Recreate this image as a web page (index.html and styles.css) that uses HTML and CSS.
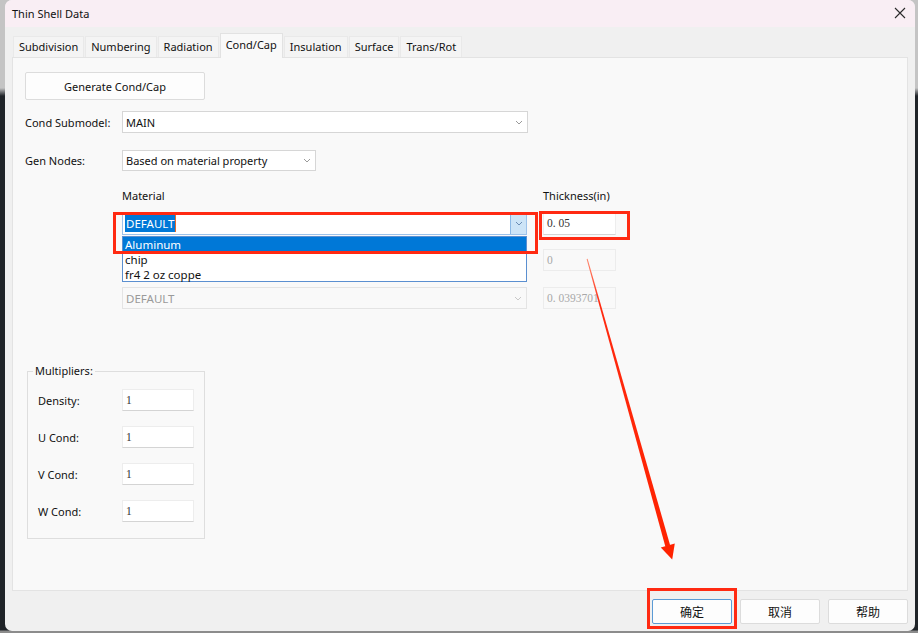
FILE: index.html
```html
<!DOCTYPE html>
<html>
<head>
<meta charset="utf-8">
<title>Thin Shell Data</title>
<link rel="stylesheet" href="styles.css">
</head>
<body>
<div class="screen">
  <div class="win">
    <div class="titlebar">
      <span class="title">Thin Shell Data</span>
      <svg class="close" width="12" height="12" viewBox="0 0 12 12"><path d="M1 1L11 11M11 1L1 11" stroke="#2b2b2b" stroke-width="1.1" fill="none"/></svg>
    </div>
    <div class="tabs">
      <div class="tab">Subdivision</div>
      <div class="tab">Numbering</div>
      <div class="tab">Radiation</div>
      <div class="tab active">Cond/Cap</div>
      <div class="tab">Insulation</div>
      <div class="tab">Surface</div>
      <div class="tab">Trans/Rot</div>
    </div>
    <div class="panel">
      <div class="btn gen">Generate Cond/Cap</div>
      <div class="row r-sub">
        <span class="lbl">Cond Submodel:</span>
        <div class="combo c-sub"><span class="ctext">MAIN</span><svg class="chev" width="8" height="5" viewBox="0 0 8 5"><path d="M1 1L4 4L7 1" stroke="#9a9a9a" fill="none"/></svg></div>
      </div>
      <div class="row r-gen">
        <span class="lbl">Gen Nodes:</span>
        <div class="combo c-gen"><span class="ctext">Based on material property</span><svg class="chev" width="8" height="5" viewBox="0 0 8 5"><path d="M1 1L4 4L7 1" stroke="#9a9a9a" fill="none"/></svg></div>
      </div>
      <div class="mat">
        <div class="mrow hdr"><span class="mcol">Material</span><span class="tcol">Thickness(in)</span></div>
        <div class="mrow m1">
          <div class="combo mcol c-act"><span class="sel">DEFAULT</span><span class="dropbtn"><svg width="8" height="5" viewBox="0 0 8 5"><path d="M1 1L4 4L7 1" stroke="#6a8db5" fill="none"/></svg></span></div>
          <div class="num tcol">0. 05</div>
        </div>
        <div class="mrow m2">
          <div class="mcol"></div>
          <div class="num tcol dis">0</div>
        </div>
        <div class="mrow m3">
          <div class="combo mcol c-dis"><span class="ctext">DEFAULT</span><svg class="chev" width="8" height="5" viewBox="0 0 8 5"><path d="M1 1L4 4L7 1" stroke="#c8c8c8" fill="none"/></svg></div>
          <div class="num tcol dis">0. 0393701</div>
        </div>
      </div>
      <fieldset class="mult">
        <legend>Multipliers:</legend>
        <div class="frow"><span class="flbl">Density:</span><div class="num fin">1</div></div>
        <div class="frow"><span class="flbl">U Cond:</span><div class="num fin">1</div></div>
        <div class="frow"><span class="flbl">V Cond:</span><div class="num fin">1</div></div>
        <div class="frow"><span class="flbl">W Cond:</span><div class="num fin">1</div></div>
      </fieldset>
      <div class="dropdown">
        <div class="item hi">Aluminum</div>
        <div class="item">chip</div>
        <div class="item">fr4 2 oz coppe</div>
      </div>
    </div>
    <div class="footer">
      <div class="btn fbtn def">确定</div>
      <div class="btn fbtn">取消</div>
      <div class="btn fbtn">帮助</div>
    </div>
    <div class="mark mk1"></div>
    <div class="mark mk2"></div>
    <div class="mark mk3"></div>
    <svg class="arrow" width="918" height="633" viewBox="0 0 918 633">
      <defs>
        <linearGradient id="ag" x1="587" y1="259" x2="672" y2="559" gradientUnits="userSpaceOnUse">
          <stop offset="0" stop-color="#ff8a70"/>
          <stop offset="0.15" stop-color="#ff2a10"/>
          <stop offset="1" stop-color="#ff2200"/>
        </linearGradient>
      </defs>
      <polygon points="586.6,259 587.6,258.8 670.2,545.4 665.4,546.8" fill="url(#ag)"/>
      <polygon points="674.8,543.6 660.8,547.6 672.2,559.5" fill="#ff2200"/>
    </svg>
  </div>
</div>
</body>
</html>
```
FILE: styles.css
```css
html, body {
  margin: 0;
  padding: 0;
}
body {
  width: 918px;
  height: 633px;
  overflow: hidden;
  background: linear-gradient(to bottom, #c4c4c4 0, #c4c4c4 88px, #1f2328 96px, #1f2328 630px, #8c8c8c 631px, #8c8c8c 633px);
  font-family: "Noto Sans", "Open Sans", sans-serif;
  font-size: 11px;
  color: #111;
}
.screen {
  padding-left: 5px;
}
.win {
  position: relative;
  width: 910px;
  height: 631px;
  background: #f0f0f0;
  border-radius: 7px;
  overflow: hidden;
  display: flex;
  flex-direction: column;
}
.titlebar {
  height: 27px;
  flex: none;
  background: #f9eef4;
  display: flex;
  align-items: center;
  justify-content: space-between;
  padding: 0 9px 0 7px;
}
.title {
  font-size: 11px;
  line-height: 16px;
}
.close {
  margin-top: -2px;
}
.tabs {
  display: flex;
  align-items: flex-end;
  height: 23px;
  margin-top: 7px;
  padding-left: 8px;
  flex: none;
  position: relative;
  z-index: 2;
}
.tab {
  height: 20px;
  line-height: 20px;
  padding: 0 5px;
  margin-right: 1px;
  background: #f4f4f4;
  border: 1px solid #e9e9e9;
  border-bottom: none;
  white-space: nowrap;
}
.tab.active {
  line-height: 21px;
  background: #f9f9f9;
  border-color: #e2e2e2;
  margin-bottom: -1px;
  height: 24px;
}
.panel {
  position: relative;
  margin-left: 7px;
  width: 896px;
  height: 534px;
  box-sizing: border-box;
  background: #f9f9f9;
  border: 1px solid #e3e3e3;
  padding: 14px 0 0 12px;
  flex: none;
}
.btn {
  box-sizing: border-box;
  background: #fdfdfd;
  border: 1px solid #dcdcdc;
  border-radius: 2px;
  display: flex;
  align-items: center;
  justify-content: center;
}
.gen {
  width: 180px;
  height: 28px;
}
.row {
  display: flex;
  align-items: center;
}
.lbl {
  width: 97px;
  flex: none;
}
.r-sub {
  margin-top: 11px;
}
.r-gen {
  margin-top: 17px;
}
.combo {
  box-sizing: border-box;
  height: 22px;
  background: #fff;
  border: 1px solid #d6d6d6;
  display: flex;
  align-items: center;
  justify-content: space-between;
  padding: 0 4px 0 3px;
  position: relative;
}
.ctext {
  white-space: nowrap;
}
.c-sub {
  width: 406px;
}
.c-gen {
  width: 194px;
  height: 21px;
}
.mat {
  margin-top: 17px;
  margin-left: 97px;
}
.mrow {
  display: flex;
  gap: 16px;
}
.mcol {
  width: 405px;
  flex: none;
}
.tcol {
  width: 73px;
  flex: none;
}
.hdr {
  height: 16px;
  line-height: 16px;
}
.m1 {
  margin-top: 8px;
  height: 23px;
}
.m2 {
  margin-top: 14px;
  height: 22px;
}
.m3 {
  margin-top: 16px;
  height: 22px;
}
.c-act {
  height: 23px;
  border-color: #9cc2ea;
  padding: 0 0 0 2px;
}
.sel {
  background: #0078d7;
  color: #fff;
  font-size: 11.5px;
  line-height: 17px;
  padding: 0 1px;
  border-right: 1px solid #e86a2a;
}
.dropbtn {
  width: 16px;
  height: 100%;
  box-sizing: border-box;
  background: #cce4f7;
  border-left: 1px solid #8ab8e6;
  display: flex;
  align-items: center;
  justify-content: center;
}
.c-dis {
  background: #f9f9f9;
  border-color: #e4e4e4;
  color: #9a9a9a;
  font-size: 11.5px;
}
.num {
  box-sizing: border-box;
  height: 100%;
  background: #fff;
  border: 1px solid #ededed;
  border-bottom: 1px solid #d4d4d4;
  font-family: "Liberation Serif", serif;
  font-size: 11.5px;
  line-height: 16px;
  padding: 2px 0 0 3px;
  color: #333;
  white-space: nowrap;
  overflow: hidden;
}
.num.dis {
  background: #f9f9f9;
  border-color: #ececec;
  color: #a8a8a8;
}
.mult {
  margin: 54px 0 0 2px;
  width: 178px;
  height: 176px;
  box-sizing: border-box;
  border: 1px solid #dedede;
  padding: 0;
  min-inline-size: 0;
}
.mult legend {
  padding: 0 2px;
  margin-left: 5px;
  line-height: 16px;
}
.frow {
  display: flex;
  align-items: center;
  height: 22px;
  padding-left: 10px;
  margin-top: 15px;
}
.frow:first-of-type {
  margin-top: 10px;
}
.flbl {
  width: 84px;
  flex: none;
}
.fin {
  width: 72px;
  height: 22px;
  padding-left: 3px;
}
.dropdown {
  position: absolute;
  left: 109px;
  top: 178px;
  width: 405px;
  height: 46px;
  box-sizing: border-box;
  background: #fff;
  border: 1px solid #5b8fd0;
  font-size: 11.5px;
  z-index: 3;
}
.item {
  height: 15px;
  line-height: 15px;
  padding-left: 2px;
}
.item.hi {
  background: #0078d7;
  color: #fff;
}
.footer {
  display: flex;
  justify-content: flex-end;
  gap: 8px;
  padding: 8px 7px 0 0;
}
.fbtn {
  width: 80px;
  height: 25px;
  font-family: "Noto Sans CJK SC", "Noto Sans", sans-serif;
  font-size: 12px;
  background: #fdfdfd;
}
.fbtn.def {
  border-color: #5b9bd5;
}
.mark {
  position: absolute;
  box-sizing: border-box;
  border: 3px solid #ff2a12;
  z-index: 5;
}
.mk1 {
  left: 108px;
  top: 212px;
  width: 425px;
  height: 42px;
}
.mk2 {
  left: 534px;
  top: 211px;
  width: 91px;
  height: 29px;
}
.mk3 {
  left: 642px;
  top: 588px;
  width: 90px;
  height: 41px;
}
.arrow {
  position: absolute;
  left: -5px;
  top: 0;
  z-index: 6;
}
```
